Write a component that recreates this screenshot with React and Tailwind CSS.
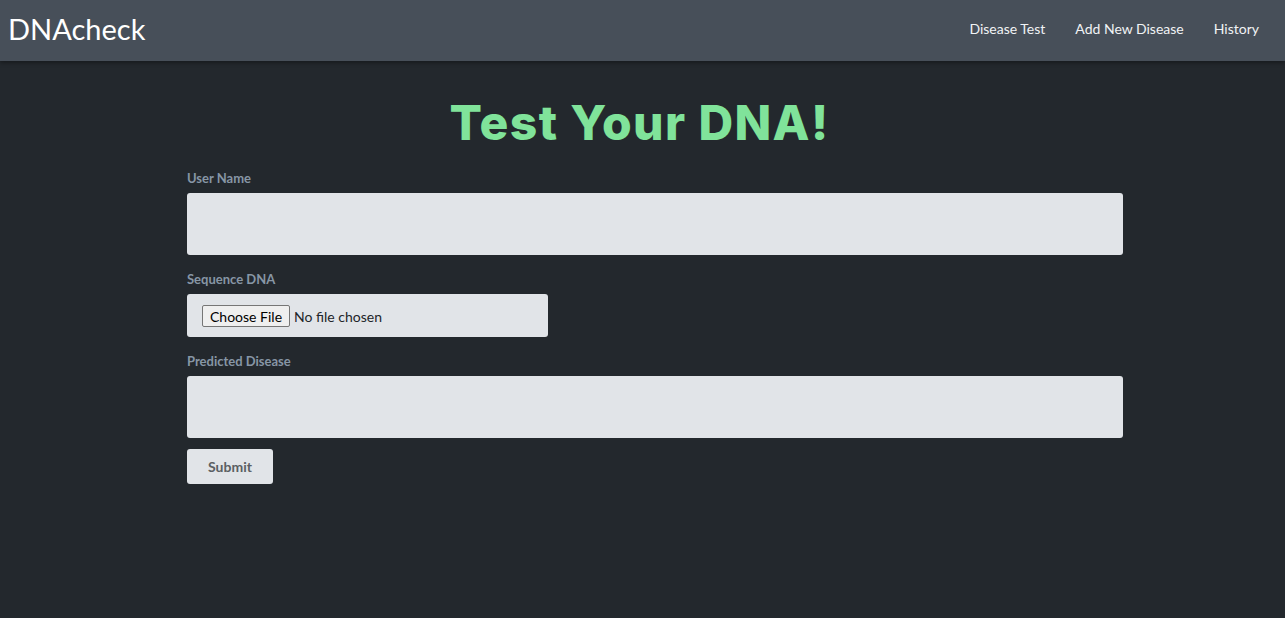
import React from "react";

export default function App() {
  return (
    <div className="min-h-[618px] bg-[#23282d] font-['Lato',sans-serif]">
      <nav className="h-[61px] bg-[#474f59] flex items-center justify-between pl-2 pr-[26px] pb-[4px] shadow-[0_2px_4px_rgba(0,0,0,0.35)]">
        <a href="#" className="text-[29px] text-white leading-none">DNAcheck</a>
        <div className="flex items-center gap-[30px] text-[14px] text-[#f1f3f5]">
          <a href="#">Disease Test</a>
          <a href="#">Add New Disease</a>
          <a href="#">History</a>
        </div>
      </nav>
      <main className="pt-[33px]">
        <h1 className="text-center text-[48px] leading-[58px] font-extrabold text-[#80e39a] font-['Inter',sans-serif] tracking-[1.4px] pr-[6px]">
          Test Your DNA!
        </h1>
        <form className="ml-[187px] w-[936px] mt-[18px] flex flex-col" onSubmit={e => e.preventDefault()}>
          <label className="text-[13px] font-bold text-[#8796a5] leading-[16px]">User Name</label>
          <input type="text" className="mt-[7px] h-[62px] w-full rounded-[3px] bg-[#e1e4e8] px-3 outline-none" />
          <label className="mt-[16px] text-[13px] font-bold text-[#8796a5] leading-[16px]">Sequence DNA</label>
          <div className="mt-[7px] h-[43px] w-[361px] rounded-[3px] bg-[#e1e4e8] flex items-center pl-[15px]">
            <input
              type="file"
              className="text-[14px] text-[#212529] font-['Lato',sans-serif] file:mr-[4px] file:h-[22px] file:px-[7px] file:border file:border-[#767676] file:rounded-[2px] file:bg-[#efefef] file:text-[#000] file:text-[14px] file:font-['Lato',sans-serif]"
            />
          </div>
          <label className="mt-[16px] text-[13px] font-bold text-[#8796a5] leading-[16px]">Predicted Disease</label>
          <input type="text" className="mt-[7px] h-[62px] w-full rounded-[3px] bg-[#e1e4e8] px-3 outline-none" />
          <div className="mt-[11px]">
            <button type="submit" className="h-[35px] w-[86px] rounded-[3px] bg-[#e1e4e8] text-[14px] font-bold text-[#5b5f63]">
              Submit
            </button>
          </div>
        </form>
      </main>
    </div>
  );
}
